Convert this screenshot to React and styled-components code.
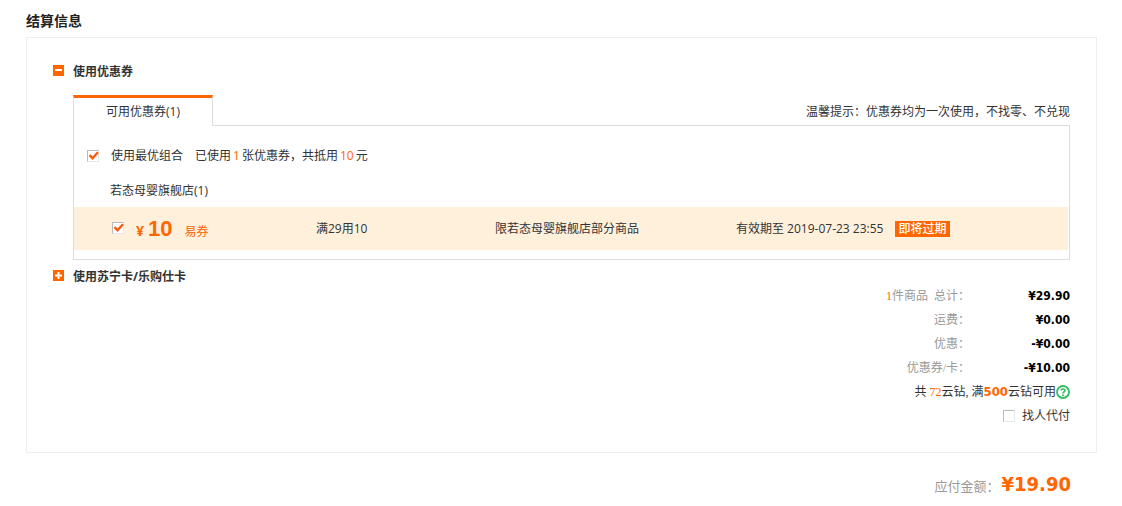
import React, { useState } from 'react';
import styled, { createGlobalStyle } from 'styled-components';

const GlobalStyle = createGlobalStyle`
  * {
    box-sizing: border-box;
  }

  body {
    margin: 0;
    background: #fff;
    color: #333;
    font: 12px/24px 'Open Sans', 'Noto Sans CJK SC', sans-serif;
  }
`;

const Page = styled.main`
  padding: 9px 25px 6px 26px;
`;

const PageTitle = styled.h1`
  margin: 0 0 4px;
  font-size: 14px;
  line-height: 24px;
  color: #222;
`;

const Panel = styled.section`
  padding: 27px 26px 24px;
  border: 1px solid #eee;
`;

const SectionTitle = styled.h2`
  display: flex;
  align-items: center;
  gap: 9px;
  margin: 0;
  font-size: 12px;
  line-height: 14px;
`;

const ToggleButton = styled.button`
  display: flex;
  width: 11px;
  height: 11px;
  margin-bottom: 3px;
  padding: 0;
  border: 0;
  background: #f60;
  cursor: pointer;
`;

const Coupons = styled.div`
  margin: 16px 0 10px 20px;
`;

const TabBar = styled.div`
  display: flex;
  justify-content: space-between;
`;

const Tab = styled.button`
  width: 140px;
  height: 31px;
  margin-bottom: -1px;
  padding: 0;
  border: 1px solid #ddd;
  border-top: 3px solid #f60;
  border-bottom: 0;
  background: #fff;
  color: inherit;
  font: inherit;
  z-index: 1;
`;

const Tip = styled.p`
  margin: 0;
  padding-top: 5px;
`;

const CouponBox = styled.div`
  padding: 18px 1px 9px 0;
  border: 1px solid #ddd;
`;

const BestCombo = styled.div`
  display: flex;
  gap: 12px;
  padding-left: 13px;
`;

const CheckLabel = styled.label`
  display: flex;
  align-items: center;
  gap: ${(props) => props.$gap || 11}px;
`;

const Orange = styled.span`
  color: #f60;
`;

const Count = styled(Orange)`
  margin: 0 2px;
`;

const ShopName = styled.h3`
  margin: 11px 0 4px 36px;
  font-size: 12px;
  font-weight: normal;
`;

const CouponRow = styled.div`
  display: grid;
  grid-template-columns: 204fr 179fr 241fr 332fr;
  align-items: center;
  height: 43px;
  padding-left: 38px;
  background: #fff0dc;
`;

const Worth = styled.span`
  display: flex;
  align-items: baseline;
  padding-top: 4px;
  color: #f60;
`;

const Yuan = styled.b`
  margin-right: 4px;
  font-size: 14px;
`;

const Amount = styled.b`
  margin-right: 12px;
  font-family: 'Liberation Sans', sans-serif;
  font-size: 22px;
`;

const Badge = styled.span`
  display: inline-block;
  margin-left: 12px;
  padding: 0 4px 0 3px;
  background: #f60;
  color: #fff;
  font-weight: 500;
  line-height: 16px;
`;

const Summary = styled.div`
  font-family: 'Liberation Serif', 'Noto Sans CJK SC', serif;
`;

const Totals = styled.dl`
  display: grid;
  grid-template-columns: 1fr 100px;
  margin: 0;
  text-align: right;
`;

const TotalName = styled.dt`
  color: #999;
`;

const TotalValue = styled.dd`
  margin: 0;
  color: #000;
  font-family: 'DejaVu Sans Condensed', 'DejaVu Sans', sans-serif;
  font-weight: bold;
`;

const SummaryLine = styled.div`
  display: flex;
  align-items: center;
  justify-content: flex-end;
  white-space: pre;
`;

const Diamonds = styled.b`
  color: #f60;
  font-family: 'DejaVu Sans Condensed', 'DejaVu Sans', sans-serif;
  font-size: 13px;
`;

const HelpLink = styled.a`
  display: flex;
`;

const Payable = styled.div`
  display: flex;
  align-items: baseline;
  justify-content: flex-end;
  gap: 2px;
  padding: 19px 26px 0 0;
  color: #999;
  font-size: 13px;
`;

const PayablePrice = styled.strong`
  color: #f60;
  font-family: 'DejaVu Sans Condensed', 'DejaVu Sans', sans-serif;
  font-size: 20px;
`;

const CheckWrap = styled.span`
  position: relative;
  display: flex;
  width: 13px;
  height: 13px;
`;

const CheckInput = styled.input`
  width: 12px;
  height: 12px;
  margin: 0;
  border: 1px solid #e8e8e8;
  border-top-color: #bbb;
  border-left-color: #bbb;
  background: #fff;
  appearance: none;
`;

const Tick = styled.svg`
  position: absolute;
  inset: 0;
  pointer-events: none;
`;

const Checkbox = ({ checked, ...rest }) => (
  <CheckWrap>
    <CheckInput type="checkbox" checked={checked} {...rest} />
    {checked && (
      <Tick width="13" height="13" viewBox="0 0 13 13">
        <path d="M2.5 5.2 L5.5 8.2 L11 2.2" fill="none" stroke="#fa5a0f" strokeWidth="2.4" />
      </Tick>
    )}
  </CheckWrap>
);

const Toggle = ({ open, ...rest }) => (
  <ToggleButton type="button" aria-expanded={open} {...rest}>
    <svg width="11" height="11" viewBox="0 0 11 11">
      <path d={open ? 'M2 5h7' : 'M2 5.5h7M5.5 2v7'} stroke="#fff" strokeWidth="2" />
    </svg>
  </ToggleButton>
);

const HelpIcon = () => (
  <svg width="14" height="14" viewBox="0 0 14 14" fill="none" stroke="#2fbf5b">
    <circle cx="7" cy="7" r="6" strokeWidth="1.8" />
    <path d="M5 5.6C5 3.4 9 3.4 9 5.5C9 6.8 7 6.8 7 8.4" strokeWidth="1.6" />
    <path d="M7 9.4v1.6" strokeWidth="1.8" />
  </svg>
);

const totals = [
  { name: '运费：', value: '¥0.00' },
  { name: '优惠：', value: '-¥0.00' },
  { name: '优惠券/卡：', value: '-¥10.00' },
];

const App = () => {
  const [best, setBest] = useState(true);
  const [used, setUsed] = useState(true);
  const [friendPay, setFriendPay] = useState(false);

  return (
    <Page lang="zh-CN">
      <GlobalStyle />
      <PageTitle>结算信息</PageTitle>
      <Panel>
        <SectionTitle>
          <Toggle open aria-label="收起优惠券" />
          使用优惠券
        </SectionTitle>

        <Coupons>
          <TabBar>
            <Tab type="button">可用优惠券(1)</Tab>
            <Tip>温馨提示：优惠券均为一次使用，不找零、不兑现</Tip>
          </TabBar>
          <CouponBox>
            <BestCombo>
              <CheckLabel>
                <Checkbox checked={best} onChange={() => setBest(!best)} />
                使用最优组合
              </CheckLabel>
              <span>
                已使用<Count>1</Count>张优惠券，共抵用<Count>10</Count>元
              </span>
            </BestCombo>
            <ShopName>若态母婴旗舰店(1)</ShopName>
            <CouponRow>
              <CheckLabel>
                <Checkbox checked={used} onChange={() => setUsed(!used)} />
                <Worth>
                  <Yuan>¥</Yuan>
                  <Amount>10</Amount>
                  易券
                </Worth>
              </CheckLabel>
              <span>满29用10</span>
              <span>限若态母婴旗舰店部分商品</span>
              <span>
                有效期至 2019-07-23 23:55
                <Badge>即将过期</Badge>
              </span>
            </CouponRow>
          </CouponBox>
        </Coupons>

        <SectionTitle>
          <Toggle open={false} aria-label="展开苏宁卡" />
          使用苏宁卡/乐购仕卡
        </SectionTitle>

        <Summary>
          <Totals>
            <TotalName>
              <Orange>1</Orange>件商品&nbsp; 总计：
            </TotalName>
            <TotalValue>¥29.90</TotalValue>
            {totals.map((item) => (
              <React.Fragment key={item.name}>
                <TotalName>{item.name}</TotalName>
                <TotalValue>{item.value}</TotalValue>
              </React.Fragment>
            ))}
          </Totals>
          <SummaryLine>
            共 <Orange>72</Orange>云钻, 满<Diamonds>500</Diamonds>云钻可用
            <HelpLink href="#help" aria-label="云钻说明">
              <HelpIcon />
            </HelpLink>
          </SummaryLine>
          <SummaryLine>
            <CheckLabel $gap={6}>
              <Checkbox checked={friendPay} onChange={() => setFriendPay(!friendPay)} />
              找人代付
            </CheckLabel>
          </SummaryLine>
        </Summary>
      </Panel>

      <Payable>
        应付金额：<PayablePrice>¥19.90</PayablePrice>
      </Payable>
    </Page>
  );
};

export default App;
